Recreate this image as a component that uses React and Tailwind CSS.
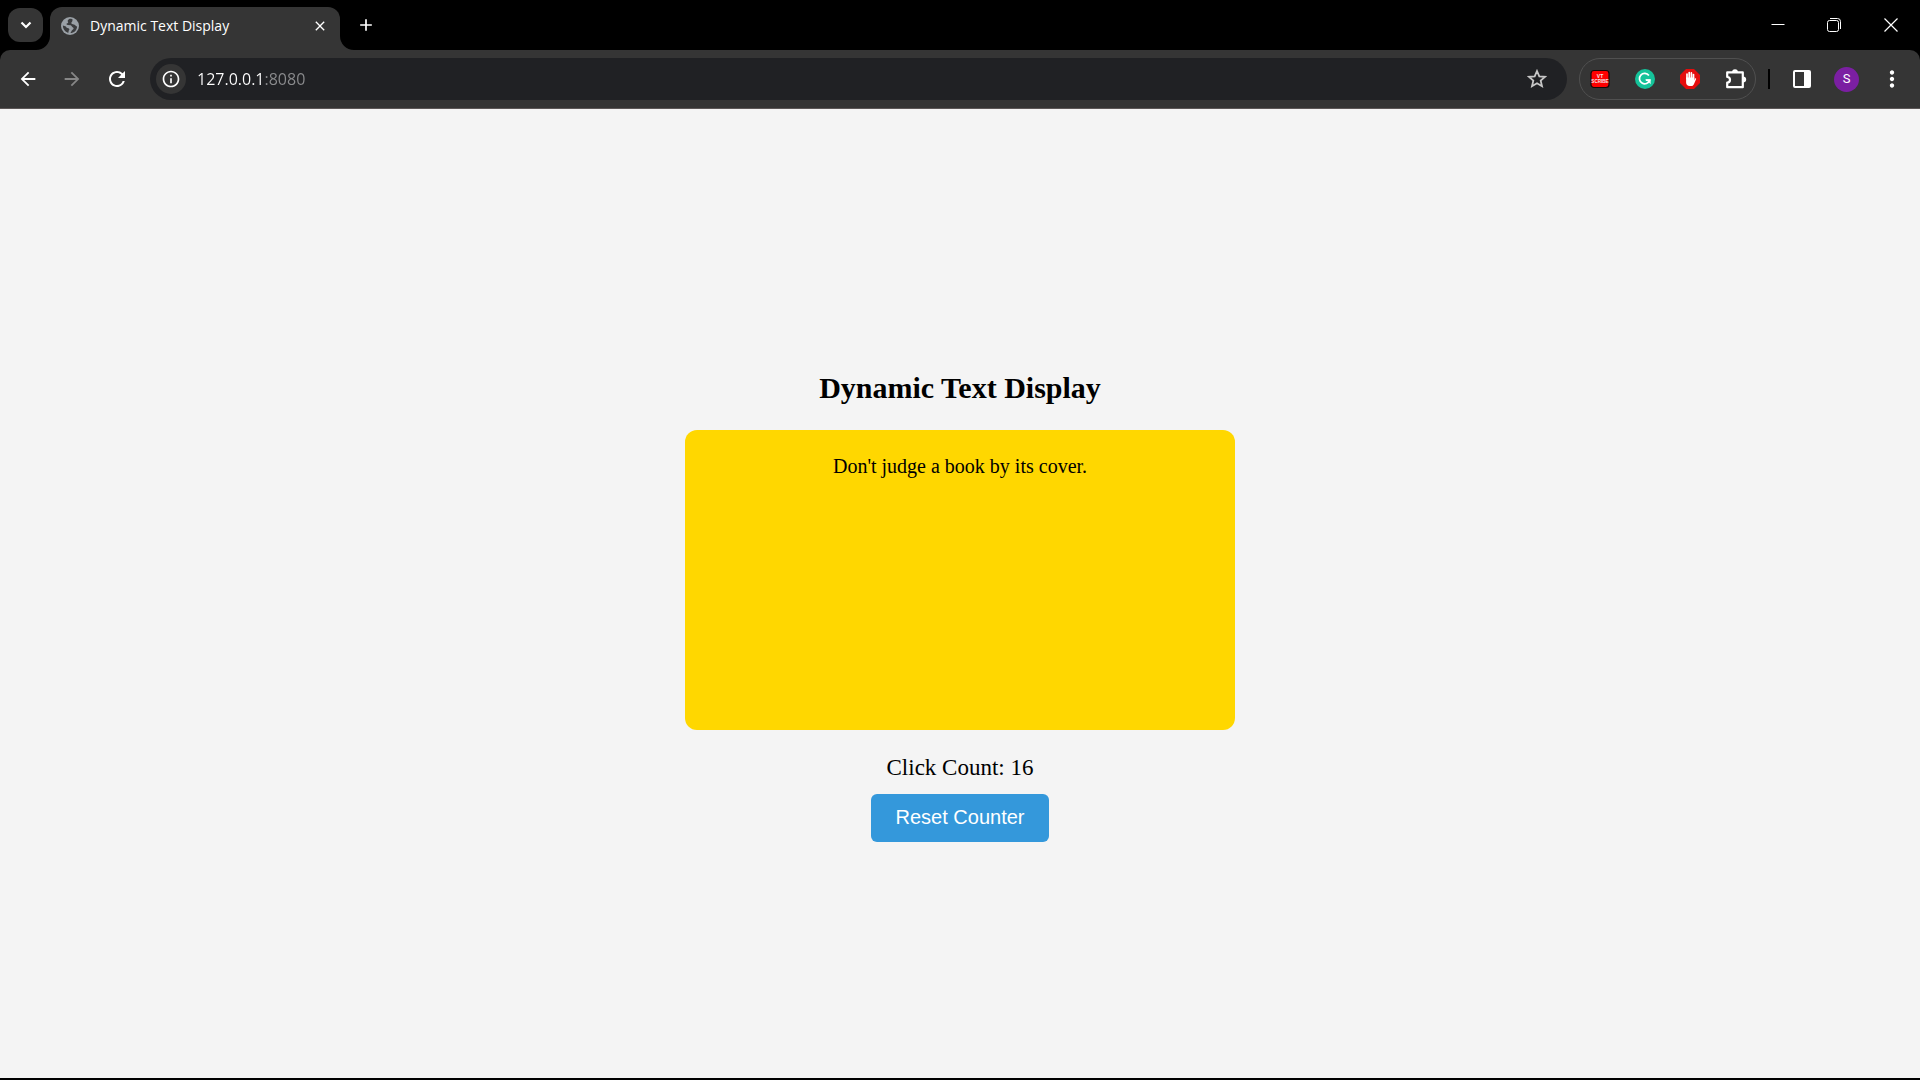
import { useState } from "react";
import {
  MdAdd,
  MdArrowBack,
  MdArrowForward,
  MdClose,
  MdInfoOutline,
  MdMoreVert,
  MdRefresh,
} from "react-icons/md";

function GlobeIcon() {
  return (
    <svg viewBox="0 0 18 18" className="size-[18px] shrink-0" aria-hidden="true">
      <circle cx="9" cy="9" r="9" fill="#9aa0a6" />
      <path
        d="M8.2 1.9 C6.8 2.8 6.2 3.9 7 4.8 C7.6 5.5 6.8 6.2 5.8 6.6 C5 7 5.6 8 6.8 8 L9.6 8.2 C11 8.5 10.6 9.8 11.6 10.2 C12.8 10.6 13 11.6 12 12.4 C11 13 10.4 14.2 9.4 16.1 C13 16 16 13 16.1 9.4 C15 9.4 14.4 8.6 13.6 7.8 C12.6 7 11.2 7.4 10.4 6.4 C9.8 5.4 11.4 5 11.4 3.8 C11.4 2.8 12 2.5 11.6 2.4 C10.5 1.9 9.4 1.8 8.2 1.9 Z M1.9 8.6 C1.8 12 4 15 7.2 15.9 C7.8 14.6 7.4 13.8 8.2 13 C9 12 7.6 11.2 6.6 11 C5.2 10.8 5.4 9.4 4.2 9.2 Z"
        fill="#3b3c3e"
      />
    </svg>
  );
}

function TabFlare({ className }) {
  return (
    <svg viewBox="0 0 14 14" className={className} aria-hidden="true">
      <path d="M14 0 V14 H0 A14 14 0 0 0 14 0 Z" fill="#353535" />
    </svg>
  );
}

function ScribeIcon() {
  return (
    <svg viewBox="0 0 20 20" className="size-5" aria-hidden="true">
      <rect x="1" y="1.5" width="18" height="17" rx="3" fill="#fe0000" stroke="#160808" strokeWidth="1.2" />
      <text x="10" y="8.8" textAnchor="middle" fontSize="5" fontWeight="bold" fill="#f4e4e4" fontFamily="Liberation Sans, sans-serif">VT</text>
      <text x="10" y="13.8" textAnchor="middle" fontSize="4.6" fontWeight="bold" fill="#f4e4e4" fontFamily="Liberation Sans, sans-serif">SCRIBE</text>
    </svg>
  );
}

function GrammarIcon() {
  return (
    <svg viewBox="0 0 20 20" className="size-5" aria-hidden="true">
      <circle cx="10" cy="10" r="10" fill="#15c39a" />
      <path d="M13.9 6.6 A5.2 5.2 0 1 0 14.6 11.2 H10.8" fill="none" stroke="#fff" strokeWidth="1.7" />
      <path d="M10.2 10.4 H15.6 V15.2 L13.8 13.2 Z" fill="#fff" />
    </svg>
  );
}

function BlockIcon() {
  return (
    <svg viewBox="0 0 20 20" className="size-5" aria-hidden="true">
      <path d="M6 0 H14 L20 6 V14 L14 20 H6 L0 14 V6 Z" fill="#e40d0d" />
      <path d="M7 9.5 V5 M9.2 9 V3.6 M11.4 9 V3.9 M13.5 10 V5.6" stroke="#fff" strokeWidth="1.7" strokeLinecap="round" />
      <path d="M6.1 8.5 H14.3 V11.2 L15 9.8 C15.4 9 16.4 9.4 16.1 10.2 L13.9 15.2 C13.3 16.6 12.4 17 11 17 H9.6 C7.5 17 6.1 15.5 6.1 13.4 Z" fill="#fff" />
    </svg>
  );
}

function PuzzleIcon() {
  return (
    <svg viewBox="0 0 22 22" className="size-[22px]" aria-hidden="true">
      <path
        d="M2.2 4.4 H17.8 V19.2 H2.2 V14.6 A2.8 2.8 0 0 0 2.2 9 Z"
        fill="none"
        stroke="#fff"
        strokeWidth="2.2"
        strokeLinejoin="round"
      />
      <path d="M7 4.6 A3 3.4 0 0 1 13 4.6 Z M17.8 8.4 A3.4 3 0 0 1 17.8 14.4 Z" fill="#fff" />
    </svg>
  );
}

function SidePanelIcon() {
  return (
    <svg viewBox="0 0 18 18" className="size-[18px]" aria-hidden="true">
      <rect x="1" y="1" width="16" height="16" rx="1" fill="none" stroke="#fff" strokeWidth="2" />
      <rect x="11" y="1" width="6" height="16" fill="#fff" />
    </svg>
  );
}

function StarIcon() {
  return (
    <svg viewBox="0 0 20 20" className="size-5" aria-hidden="true">
      <path
        d="M10 2 L12.3 7.3 L18 7.8 L13.7 11.6 L15 17.2 L10 14.2 L5 17.2 L6.3 11.6 L2 7.8 L7.7 7.3 Z"
        fill="none"
        stroke="#c7c7c7"
        strokeWidth="1.8"
      />
    </svg>
  );
}

function IconButton({ label, className = "", children }) {
  return (
    <button type="button" aria-label={label} className={`flex shrink-0 items-center justify-center text-white ${className}`}>
      {children}
    </button>
  );
}

function TabStrip() {
  return (
    <div className="flex h-[50px] items-center">
      <IconButton label="Search tabs" className="ml-2 h-[34px] w-[35px] rounded-xl bg-[#353535]">
        <svg viewBox="0 0 12 12" className="size-3" aria-hidden="true">
          <path d="M1.5 3.5 L6 8 L10.5 3.5" fill="none" stroke="#fff" strokeWidth="2.2" />
        </svg>
      </IconButton>
      <div className="relative ml-[7px] flex h-[43px] w-[290px] items-center self-end rounded-t-xl bg-[#353535] pr-2 pb-[6px] pl-[11px]">
        <TabFlare className="absolute bottom-0 -left-[14px] size-[14px]" />
        <TabFlare className="absolute -right-[14px] bottom-0 size-[14px] -scale-x-100" />
        <GlobeIcon />
        <span className="ml-[11px] flex-1 text-[14px] whitespace-nowrap text-white">Dynamic Text Display</span>
        <IconButton label="Close tab" className="size-6">
          <MdClose className="size-4" />
        </IconButton>
      </div>
      <IconButton label="New tab" className="ml-3 size-7">
        <MdAdd className="size-5" />
      </IconButton>
      <div className="ml-auto flex h-full items-center">
        <IconButton label="Minimize" className="h-full w-14">
          <svg viewBox="0 0 14 14" className="size-[14px]" aria-hidden="true">
            <path d="M0.5 6.5 H13.5" stroke="#fff" />
          </svg>
        </IconButton>
        <IconButton label="Restore" className="h-full w-14">
          <svg viewBox="0 0 14 14" className="size-[14px]" fill="none" stroke="#fff" aria-hidden="true">
            <rect x="0.5" y="2.5" width="11" height="11" rx="2" />
            <path d="M3 0.5 H10.5 A3 3 0 0 1 13.5 3.5 V11" />
          </svg>
        </IconButton>
        <IconButton label="Close window" className="h-full w-[58px]">
          <svg viewBox="0 0 14 14" className="size-[14px]" aria-hidden="true">
            <path d="M0.5 0.5 L13.5 13.5 M13.5 0.5 L0.5 13.5" stroke="#fff" strokeWidth="1.2" />
          </svg>
        </IconButton>
      </div>
    </div>
  );
}

function Toolbar() {
  return (
    <div className="flex h-[59px] items-center rounded-t-[10px] border-b border-[#5c5757] bg-[#353535] pr-[15px] pl-2">
      <IconButton label="Back" className="size-10">
        <MdArrowBack className="size-[22px]" />
      </IconButton>
      <IconButton label="Forward" className="ml-1 size-10">
        <MdArrowForward className="size-[22px] text-[#868686]" />
      </IconButton>
      <IconButton label="Reload" className="ml-[5px] size-10">
        <MdRefresh className="size-6" />
      </IconButton>
      <div className="ml-[13px] flex h-[42px] flex-1 items-center rounded-full bg-[#202124] pr-[15px] pl-[6px]">
        <IconButton label="View site information" className="size-[30px] rounded-full bg-[#353535]">
          <MdInfoOutline className="size-5" />
        </IconButton>
        <input
          type="text"
          aria-label="Address"
          defaultValue="127.0.0.1:8080"
          className="ml-[11px] min-w-0 flex-1 bg-[linear-gradient(to_right,#ffffff_68px,#8b8c8e_68px)] bg-clip-text text-[16px] text-transparent outline-none"
        />
        <IconButton label="Bookmark this tab" className="size-[30px]">
          <StarIcon />
        </IconButton>
      </div>
      <div className="ml-3 flex h-[42px] items-center gap-[25px] rounded-full border border-[#505050] pr-2 pl-[10px]">
        <IconButton label="VT Scribe"><ScribeIcon /></IconButton>
        <IconButton label="Writing assistant"><GrammarIcon /></IconButton>
        <IconButton label="Ad blocker"><BlockIcon /></IconButton>
        <IconButton label="Extensions"><PuzzleIcon /></IconButton>
      </div>
      <div className="ml-3 h-5 w-[2px] bg-black" />
      <IconButton label="Side panel" className="ml-3 size-10">
        <SidePanelIcon />
      </IconButton>
      <IconButton label="Profile" className="ml-3 size-[25px] rounded-full bg-[#7b1fa2]">
        <span className="font-[Roboto,sans-serif] text-[13px]">S</span>
      </IconButton>
      <IconButton label="Menu" className="ml-5 size-[26px]">
        <MdMoreVert className="size-[26px]" />
      </IconButton>
    </div>
  );
}

export default function App() {
  const [count, setCount] = useState(16);

  return (
    <div className="flex min-h-screen flex-col border-b-2 border-black bg-[#f4f4f4]">
      <header className="bg-black font-['Open_Sans','Noto_Sans',sans-serif]">
        <TabStrip />
        <Toolbar />
      </header>
      <main className="flex flex-1 flex-col items-center justify-center font-['Liberation_Serif',serif] text-black">
        <h1 className="my-[25px] text-[30px] leading-[35px] font-bold">Dynamic Text Display</h1>
        <section className="min-h-[300px] w-full max-w-[550px] rounded-xl bg-[#ffd700] p-[25px] text-center">
          <p className="text-[20px] leading-[22px]">Don't judge a book by its cover.</p>
        </section>
        <p className="mt-[25px] text-[23px] leading-[26px]">Click Count: {count}</p>
        <button
          type="button"
          onClick={() => setCount(0)}
          className="mt-[13px] h-12 rounded-md bg-[#3498db] px-[25px] pb-[2px] font-['Liberation_Sans',sans-serif] text-[20px] text-white"
        >
          Reset Counter
        </button>
      </main>
    </div>
  );
}
